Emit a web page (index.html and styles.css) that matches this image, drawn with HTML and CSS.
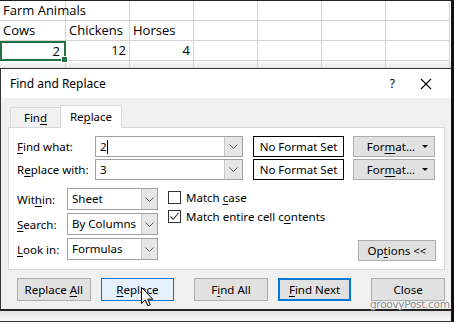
FILE: index.html
```html
<!DOCTYPE html>
<html lang="en">
<head>
    <meta charset="UTF-8">
    <title>Find and Replace</title>
    <link rel="stylesheet" href="styles.css">
</head>
<body>
    <div class="screen">
        <!-- Worksheet behind the dialog -->
        <div class="sheet">
            <div class="row">
                <div class="cell">Farm Animals</div><div class="cell"></div><div class="cell"></div><div class="cell"></div><div class="cell"></div><div class="cell"></div><div class="cell"></div>
            </div>
            <div class="row">
                <div class="cell">Cows</div><div class="cell">Chickens</div><div class="cell">Horses</div><div class="cell"></div><div class="cell"></div><div class="cell"></div><div class="cell"></div>
            </div>
            <div class="row">
                <div class="cell num selected">2<span class="handle"></span></div><div class="cell num">12</div><div class="cell num">4</div><div class="cell"></div><div class="cell"></div><div class="cell"></div><div class="cell"></div>
            </div>
            <div class="row short">
                <div class="cell"></div><div class="cell"></div><div class="cell"></div><div class="cell"></div><div class="cell"></div><div class="cell"></div><div class="cell"></div>
            </div>
        </div>

        <!-- Dialog -->
        <div class="dialog">
            <div class="titlebar">
                <span class="title">Find and Replace</span>
                <span class="help">?</span>
                <svg class="close-x" width="12" height="12" viewBox="0 0 12 12"><path d="M1 1L11 11M11 1L1 11" stroke="#000" stroke-width="1.1"/></svg>
            </div>
            <div class="dialog-body">
                <div class="tabs">
                    <div class="tab">Fin<u>d</u></div>
                    <div class="tab active">Re<u>p</u>lace</div>
                </div>
                <div class="panel">
                    <div class="field-row">
                        <label class="label"><u>F</u>ind what:</label>
                        <div class="combo"><span class="value">2<span class="caret"></span></span><span class="arrow"><svg width="9" height="5" viewBox="0 0 9 5"><path d="M0.5 0.5L4.5 4.5L8.5 0.5" fill="none" stroke="#606060"/></svg></span></div>
                        <div class="format-box">No Format Set</div>
                        <button class="btn format-btn">For<u>m</u>at... <span class="tri"></span></button>
                    </div>
                    <div class="field-row">
                        <label class="label">R<u>e</u>place with:</label>
                        <div class="combo"><span class="value">3</span><span class="arrow"><svg width="9" height="5" viewBox="0 0 9 5"><path d="M0.5 0.5L4.5 4.5L8.5 0.5" fill="none" stroke="#606060"/></svg></span></div>
                        <div class="format-box">No Format Set</div>
                        <button class="btn format-btn">For<u>m</u>at... <span class="tri"></span></button>
                    </div>
                    <div class="options">
                        <div class="selects">
                            <div class="select-row">
                                <label class="small-label">Wit<u>h</u>in:</label>
                                <div class="combo select"><span class="value">Sheet</span><span class="arrow"><svg width="9" height="5" viewBox="0 0 9 5"><path d="M0.5 0.5L4.5 4.5L8.5 0.5" fill="none" stroke="#606060"/></svg></span></div>
                            </div>
                            <div class="select-row">
                                <label class="small-label"><u>S</u>earch:</label>
                                <div class="combo select"><span class="value">By Columns</span><span class="arrow"><svg width="9" height="5" viewBox="0 0 9 5"><path d="M0.5 0.5L4.5 4.5L8.5 0.5" fill="none" stroke="#606060"/></svg></span></div>
                            </div>
                            <div class="select-row">
                                <label class="small-label"><u>L</u>ook in:</label>
                                <div class="combo select"><span class="value">Formulas</span><span class="arrow"><svg width="9" height="5" viewBox="0 0 9 5"><path d="M0.5 0.5L4.5 4.5L8.5 0.5" fill="none" stroke="#606060"/></svg></span></div>
                            </div>
                        </div>
                        <div class="checks">
                            <div class="check"><span class="box"></span><span>Match <u>c</u>ase</span></div>
                            <div class="check"><span class="box"><svg width="11" height="11" viewBox="0 0 11 11"><path d="M1.5 5.5L4.2 8.3L9.5 2" fill="none" stroke="#333" stroke-width="1.1"/></svg></span><span>Match entire cell c<u>o</u>ntents</span></div>
                        </div>
                        <div class="options-btn-wrap">
                            <button class="btn options-btn">Op<u>t</u>ions &lt;&lt;</button>
                        </div>
                    </div>
                </div>
                <div class="actions">
                    <button class="btn">Replace <u>A</u>ll</button>
                    <button class="btn hover"><u>R</u>eplace</button>
                    <button class="btn wide-gap">F<u>i</u>nd All</button>
                    <button class="btn default"><u>F</u>ind Next</button>
                    <button class="btn wide-gap">Close</button>
                </div>
            </div>
        </div>
        <div class="below"></div>

        <!-- Mouse pointer and watermark sit on top -->
        <svg class="pointer" width="13" height="20" viewBox="0 0 13 20"><path d="M0.5 0.5V16.5L4.3 13L6.8 18.8L9.2 17.8L6.8 12.2H11.8Z" fill="#fff" stroke="#000" stroke-width="1"/></svg>
        <div class="watermark">groovyPost.com</div>
    </div>
</body>
</html>
```

FILE: styles.css
```css
/* General */
body {
    margin: 0;
    background: #fff;
}

.screen {
    position: relative;
    width: 454px;
    height: 322px;
    overflow: hidden;
    box-sizing: border-box;
    border-top: 1px solid #222;
    border-right: 3px solid #111;
    border-bottom: 1px solid #333;
    background: #fff;
}

/* Worksheet */
.sheet {
    height: 67px;
    font-family: "Open Sans", sans-serif;
    font-size: 13px;
    color: #000;
}

.row {
    display: flex;
    height: 20px;
}

.row.short {
    height: 7px;
    background: linear-gradient(#fff, #e6e6e6);
}

.cell {
    box-sizing: border-box;
    width: 64px;
    flex: none;
    border-right: 1px solid #d4d4d4;
    border-bottom: 1px solid #d4d4d4;
    padding: 0 3px;
    line-height: 19px;
    white-space: nowrap;
}

.cell:first-child {
    width: 66px;
}

.row.short .cell {
    border-bottom: none;
}

.cell.num {
    text-align: right;
}

.cell.selected {
    position: relative;
    border: 2px solid #217346;
    line-height: 16px;
    padding-right: 4px;
}

.handle {
    position: absolute;
    right: -4px;
    bottom: -4px;
    width: 5px;
    height: 5px;
    background: #217346;
    border: 1px solid #fff;
}

/* Dialog */
.dialog {
    height: 243px;
    box-sizing: border-box;
    border-top: 1px solid #333;
    border-left: 1px solid #333;
    border-bottom: 2px solid #222;
    font-family: "Noto Sans", sans-serif;
    font-size: 11.5px;
    color: #000;
    display: flex;
    flex-direction: column;
}

.below {
    height: 10px;
    background: linear-gradient(#e2e2e2, #f6f6f6);
}

.titlebar {
    height: 29px;
    background: #fff;
    display: flex;
    align-items: center;
    padding-left: 9px;
}

.title {
    font-size: 12px;
    flex: 1;
}

.help {
    font-size: 12px;
    margin-right: 25px;
}

.close-x {
    margin-right: 19px;
}

.dialog-body {
    flex: 1;
    background: #f0f0f0;
    padding: 7px 6px 0 7px;
}

u {
    text-decoration-thickness: 1px;
    text-underline-offset: 2px;
}

/* Tabs */
.tabs {
    display: flex;
    align-items: flex-end;
    height: 22px;
    padding-left: 2px;
}

.tab {
    box-sizing: border-box;
    height: 20px;
    width: 51px;
    padding-top: 2px;
    text-align: center;
    border: 1px solid #d9d9d9;
    border-bottom: none;
    background: #f0f0f0;
}

.tab.active {
    height: 23px;
    width: 62px;
    margin-left: -1px;
    margin-bottom: -1px;
    padding-top: 3px;
    background: #fff;
    position: relative;
}

.panel {
    height: 143px;
    box-sizing: border-box;
    background: #fff;
    border: 1px solid #d9d9d9;
    padding: 8px 8px 0 8px;
}

.field-row {
    display: flex;
    align-items: center;
    height: 21px;
    margin-bottom: 2px;
}

.label {
    width: 78px;
    flex: none;
}

.combo {
    box-sizing: border-box;
    width: 148px;
    height: 21px;
    border: 1px solid #a0a0a0;
    display: flex;
    background: #fff;
}

.combo .value {
    flex: 1;
    padding-left: 4px;
    line-height: 19px;
}

.caret {
    display: inline-block;
    width: 1px;
    height: 14px;
    background: #000;
    vertical-align: -3px;
}

.combo .arrow {
    width: 17px;
    display: flex;
    align-items: center;
    justify-content: center;
    border-left: 1px solid #c8c8c8;
    background: #e6e6e6;
}

.format-box {
    box-sizing: border-box;
    width: 91px;
    height: 21px;
    margin-left: 10px;
    border: 1px solid #000;
    text-align: center;
    line-height: 19px;
}

/* Buttons */
.btn {
    box-sizing: border-box;
    font-family: inherit;
    font-size: 11.5px;
    color: #000;
    background: #e1e1e1;
    border: 1px solid #adadad;
    padding: 0;
    margin: 0;
    height: 23px;
    width: 74px;
}

.format-btn {
    width: 82px;
    height: 21px;
    margin-left: 9px;
    position: relative;
    padding-right: 6px;
}

.tri {
    position: absolute;
    right: 6px;
    top: 8px;
    border-left: 3px solid transparent;
    border-right: 3px solid transparent;
    border-top: 3px solid #000;
}

/* Lower options */
.options {
    display: flex;
    margin-top: 8px;
}

.selects {
    display: flex;
    flex-direction: column;
    gap: 3px;
}

.select-row {
    display: flex;
    align-items: center;
}

.small-label {
    width: 50px;
}

.combo.select {
    width: 91px;
    height: 22px;
}

.combo.select .arrow {
    width: 15px;
}

.checks {
    margin-left: 10px;
    margin-top: 3px;
}

.check {
    display: flex;
    align-items: center;
    height: 13px;
    margin-bottom: 6px;
}

.box {
    box-sizing: border-box;
    width: 13px;
    height: 13px;
    border: 1px solid #333;
    margin-right: 5px;
    display: flex;
    align-items: center;
    justify-content: center;
}

.options-btn-wrap {
    flex: 1;
    display: flex;
    align-items: flex-end;
    justify-content: flex-end;
}

.options-btn {
    width: 78px;
    height: 21px;
    margin-bottom: -1px;
}

/* Bottom buttons */
.actions {
    display: flex;
    padding: 8px 0 0 9px;
    gap: 10px;
}

.actions .wide-gap {
    margin-left: 10px;
}

.btn.hover {
    background: #e5f1fb;
    border-color: #0078d7;
}

.btn.default {
    border: 2px solid #0078d7;
}

/* Overlays */
.pointer {
    position: absolute;
    left: 141px;
    top: 286px;
}

.watermark {
    position: absolute;
    left: 370px;
    top: 297px;
    font-family: "DejaVu Sans", sans-serif;
    font-size: 10.5px;
    letter-spacing: -0.3px;
    color: #8a8a8a;
    text-shadow: 0 0 1px #fff, 0 0 1px #fff;
}
```
